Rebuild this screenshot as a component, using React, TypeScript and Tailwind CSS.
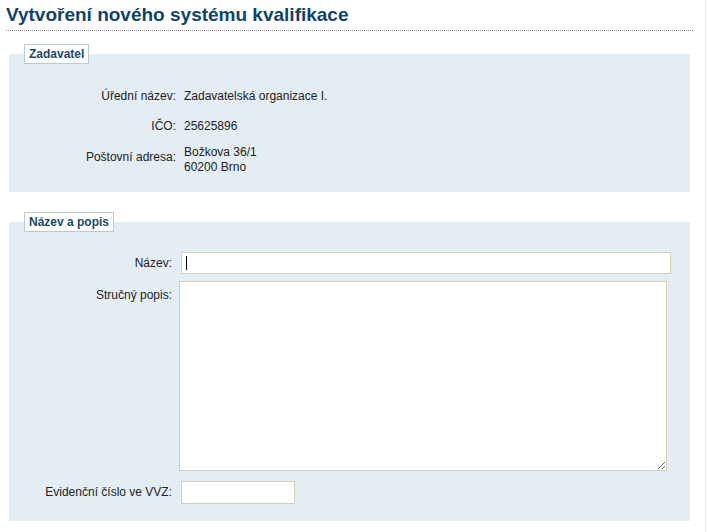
import React from "react";

const font = { fontFamily: '"Liberation Sans", Arial, sans-serif' };

export default function App() {
  return (
    <div className="w-[707px] h-[532px] bg-white overflow-hidden" style={font}>
      <div className="w-[706px] h-[532px] border-r border-[#def3fb]">
        <div className="ml-[6px] w-[687px] pt-[4px] pb-[4px] border-b border-dotted border-[#8a8a8a]">
          <h1 className="text-[19px] leading-[22px] font-bold text-[#0f4467]">
            Vytvoření nového systému kvalifikace
          </h1>
        </div>

        <fieldset className="ml-[9px] mt-[13px] w-[681px] bg-[#e5edf4] pb-[17px]">
          <legend className="ml-[15px] h-[20px] px-[4px] border border-[#b8cad6] bg-white text-[12px] leading-[18px] font-bold text-[#1c4a66]">
            Zadavatel
          </legend>
          <div className="mt-[25px] grid grid-cols-[167px_1fr] gap-x-[8px] text-[12px] leading-[15px] text-[#222]">
            <div className="text-right">Úřední název:</div>
            <div>Zadavatelská organizace I.</div>
            <div className="text-right mt-[15px]">IČO:</div>
            <div className="mt-[15px]">25625896</div>
            <div className="text-right mt-[11px] pt-[5px]">Poštovní adresa:</div>
            <div className="mt-[11px]">
              <div>Božkova 36/1</div>
              <div>60200 Brno</div>
            </div>
          </div>
        </fieldset>

        <fieldset className="ml-[9px] mt-[20px] w-[681px] bg-[#e5edf4] pb-[17px]">
          <legend className="ml-[15px] h-[20px] px-[4px] border border-[#b8cad6] bg-white text-[12px] leading-[18px] font-bold text-[#1c4a66]">
            Název a popis
          </legend>
          <div className="mt-[20px] grid grid-cols-[163px_1fr] gap-x-[9px] text-[12px] leading-[15px] text-[#222]">
            <label className="text-right self-center">Název:</label>
            <div className="relative w-[490px] h-[22px]">
              <input
                className="w-[490px] h-[22px] border border-[#d3cfba] bg-white px-[4px] text-[12px] outline-none"
              />
              <span className="absolute left-[5px] top-[4px] w-px h-[14px] bg-black" />
            </div>
            <label className="text-right mt-[7px] pt-[7px]">Stručný popis:</label>
            <textarea className="mt-[7px] -ml-[2px] w-[488px] h-[190px] border border-[#d3cfba] bg-white outline-none" />
            <label className="text-right mt-[10px] self-center">Evidenční číslo ve VVZ:</label>
            <input className="mt-[10px] w-[114px] h-[23px] border border-[#d3cfba] bg-white px-[4px] text-[12px] outline-none" />
          </div>
        </fieldset>
      </div>
    </div>
  );
}
